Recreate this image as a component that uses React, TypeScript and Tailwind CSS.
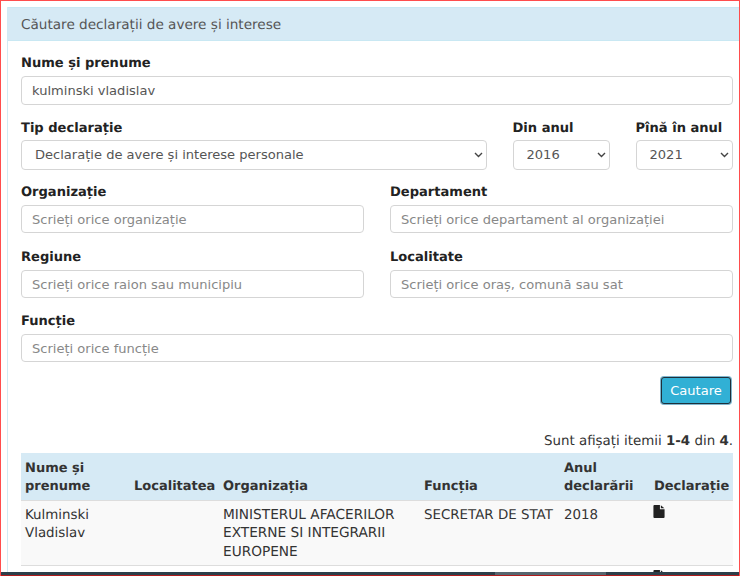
import React from 'react';

const inputClass =
    'block w-full h-[28px] rounded-[4px] border border-[#d5d5d5] bg-white px-[10px] text-[13.05px] text-[#555] placeholder:text-[#888] outline-none';
const labelClass = 'block mb-[3px] h-[19px] font-bold text-[13.05px] leading-[19px] text-[#222]';
const thClass = 'px-[4px] pb-[4px] leading-[18px] font-bold text-[13px]';
const tdClass = 'px-[4px] pt-[6px] leading-[18.5px]';

const FileIcon = () => (
    <svg width="12" height="13" viewBox="0 0 12 14" className="-ml-[1px] block">
        <path d="M1 0H7V4.5H12V13a1 1 0 0 1-1 1H1a1 1 0 0 1-1-1V1a1 1 0 0 1 1-1ZM8 0.2 11.8 3.6H8Z" fill="#222" />
    </svg>
);

const SelectBox: React.FC<{ options: string[] }> = ({ options }) => (
    <div className="relative -mt-[1px]">
        <select className="block h-[30px] w-full appearance-none rounded-[4px] border border-[#d5d5d5] bg-white pl-[13px] text-[13.05px] text-[#555] outline-none">
            {options.map((o) => (
                <option key={o}>{o}</option>
            ))}
        </select>
        <svg
            width="9"
            height="6"
            viewBox="0 0 9 6"
            className="pointer-events-none absolute right-[4px] top-[12px]"
            fill="none"
            stroke="#444"
            strokeWidth="1.4"
        >
            <path d="M1 1l3.5 3.5L8 1" />
        </svg>
    </div>
);

const App: React.FC = () => {
    return (
        <div
            className="relative h-[576px] w-[740px] overflow-hidden bg-white pt-[7px] pl-[7px] text-[13.4px] text-[#333] [text-rendering:geometricPrecision]"
            style={{ fontFamily: '"DejaVu Sans", Verdana, sans-serif' }}
        >
            <div className="w-[733px] h-[569px] border-l border-[#d1ebf5]">
                <div className="h-[34px] border-y border-[#c9e8f3] bg-[#d6eaf5] pl-[13px] text-[13.6px] leading-[34px] text-[#555]">
                    Căutare declarații de avere și interese
                </div>

                <div className="pl-[13px] pr-[7px] pt-[13px]">
                    <label className={labelClass}>Nume și prenume</label>
                    <input className={inputClass + ' h-[29px]'} defaultValue="kulminski vladislav" />

                    <div className="mt-[14px] flex">
                        <div className="w-[465.5px]">
                            <label className={labelClass}>Tip declarație</label>
                            <SelectBox options={['Declarație de avere și interese personale']} />
                        </div>
                        <div className="ml-[26px] w-[97px]">
                            <label className={labelClass}>Din anul</label>
                            <SelectBox options={['2016']} />
                        </div>
                        <div className="ml-[26px] w-[97.5px]">
                            <label className={labelClass}>Pînă în anul</label>
                            <SelectBox options={['2021']} />
                        </div>
                    </div>

                    <div className="mt-[13px] grid grid-cols-[343px_343px] gap-x-[26px] gap-y-[15px]">
                        <div>
                            <label className={labelClass}>Organizație</label>
                            <input className={inputClass} placeholder="Scrieți orice organizație" />
                        </div>
                        <div>
                            <label className={labelClass}>Departament</label>
                            <input className={inputClass} placeholder="Scrieți orice departament al organizației" />
                        </div>
                        <div>
                            <label className={labelClass}>Regiune</label>
                            <input className={inputClass} placeholder="Scrieți orice raion sau municipiu" />
                        </div>
                        <div>
                            <label className={labelClass}>Localitate</label>
                            <input className={inputClass} placeholder="Scrieți orice oraș, comună sau sat" />
                        </div>
                    </div>

                    <div className="mt-[14px]">
                        <label className={labelClass}>Funcție</label>
                        <input className={inputClass} placeholder="Scrieți orice funcție" />
                    </div>

                    <div className="mt-[15px] flex justify-end pr-[2px]">
                        <button className="h-[27px] w-[70px] rounded-[3px] border border-[#1f2f3a] bg-[#31b0d5] text-[13.05px] text-white ring-1 ring-[#7fb5cc]">
                            Cautare
                        </button>
                    </div>

                    <div className="mt-[28px] h-[20px] text-right leading-[20px]">
                        Sunt afișați itemii <b>1-4</b> din <b>4</b>.
                    </div>

                    <table className="mt-[1px] w-[712px] table-fixed border-collapse text-left">
                        <thead>
                            <tr className="h-[47px] border-b border-[#dddddd] bg-[#d6eaf5] align-bottom text-[#333]">
                                <th className={thClass + ' w-[109px]'}>Nume și prenume</th>
                                <th className={thClass + ' w-[89px]'}>Localitatea</th>
                                <th className={thClass + ' w-[201px]'}>Organizația</th>
                                <th className={thClass + ' w-[140px]'}>Funcția</th>
                                <th className={thClass + ' w-[90px]'}>Anul declarării</th>
                                <th className={thClass}>Declarație</th>
                            </tr>
                        </thead>
                        <tbody>
                            <tr className="h-[65px] border-b border-[#dddddd] bg-[#f9f9f9] align-top">
                                <td className={tdClass}>Kulminski Vladislav</td>
                                <td />
                                <td className="px-[4px] pt-[5px] leading-[18.5px] text-[13.7px]">MINISTERUL AFACERILOR EXTERNE SI INTEGRARII EUROPENE</td>
                                <td className={tdClass + ' whitespace-nowrap'}>SECRETAR DE STAT</td>
                                <td className={tdClass}>2018</td>
                                <td className="px-[4px] pt-[4px]"><FileIcon /></td>
                            </tr>
                            <tr className="align-top">
                                <td colSpan={5} />
                                <td className="px-[4px] pt-[4px]"><FileIcon /></td>
                            </tr>
                        </tbody>
                    </table>
                </div>
            </div>

            {/* taskbar strip and capture frame from the screenshot */}
            <div className="pointer-events-none absolute inset-x-0 bottom-[1px] h-[3px] bg-[#2d3f4a]">
                <div className="ml-[495px] h-full w-[111px] bg-[#56666f]" />
            </div>
            <div className="pointer-events-none absolute inset-x-0 bottom-0 h-[1px] bg-[#b01c1c]" />
            <div className="pointer-events-none absolute inset-y-0 left-0 w-[1px] bg-[#ff4d4d]" />
            <div className="pointer-events-none absolute inset-y-0 right-0 w-[1px] bg-[#ff4d4d]" />
            <div className="pointer-events-none absolute inset-x-0 top-0 h-[1px] bg-[#ff4d4d]" />
        </div>
    );
};

export default App;
